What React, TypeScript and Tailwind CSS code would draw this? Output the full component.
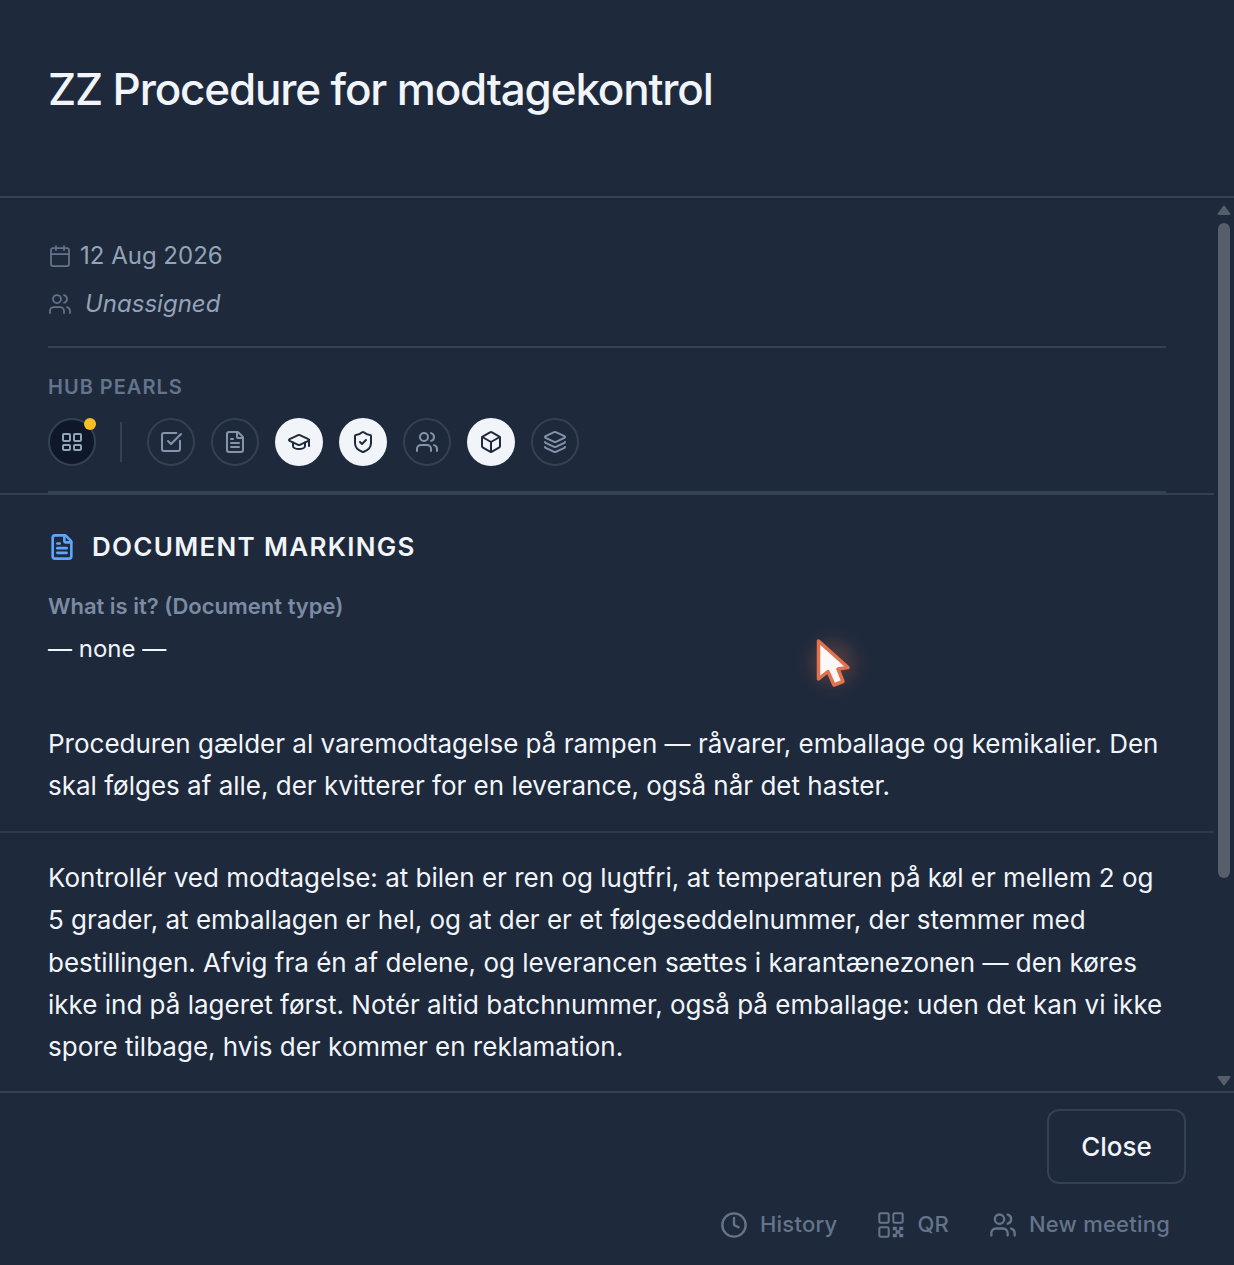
import { Calendar, Users, SquareCheckBig, FileText, GraduationCap, ShieldCheck, Box, Layers, Clock } from 'lucide-react';

const pearls = [
  { Icon: SquareCheckBig, active: false },
  { Icon: FileText, active: false },
  { Icon: GraduationCap, active: true },
  { Icon: ShieldCheck, active: true },
  { Icon: Users, active: false },
  { Icon: Box, active: true },
  { Icon: Layers, active: false },
];

// lucide's qr-code is too busy, the picture has three boxes and a checker
function QrIcon() {
  return (
    <svg viewBox="0 0 24 24" className="w-7 h-7" fill="none" stroke="currentColor" strokeWidth="1.75">
      <rect x="2" y="2" width="8" height="8" rx="1" />
      <rect x="14" y="2" width="8" height="8" rx="1" />
      <rect x="2" y="14" width="8" height="8" rx="1" />
      <path d="M13.5 13.5h3.5v3h-3.5zM19 13.5h3.5v3h-3.5zM16 16.5h4v3h-4zM13.5 19.5h3.5v3h-3.5zM19 19.5h3.5v3h-3.5z" fill="currentColor" stroke="none" />
    </svg>
  );
}

function GridIcon() {
  return (
    <svg viewBox="0 0 24 24" className="w-6 h-6" fill="none" stroke="currentColor" strokeWidth="2">
      <rect x="3" y="4" width="7" height="7" rx="1" />
      <rect x="14" y="4" width="7" height="7" rx="1" />
      <rect x="3" y="15" width="7" height="5" rx="1" />
      <rect x="14" y="15" width="7" height="5" rx="1" />
    </svg>
  );
}

export default function App() {
  return (
    <div className="relative w-[1234px] h-[1265px] flex flex-col overflow-hidden bg-[#1e293b] font-['Inter',sans-serif]">
      {/* Header */}
      <header className="h-[198px] shrink-0 border-b-2 border-[#334155] px-12 pt-[61px]">
        <h1 className="text-[44px] leading-[56px] font-medium tracking-[-0.0265em] text-[#f1f5f9]">ZZ Procedure for modtagekontrol</h1>
      </header>

      {/* Body + scrollbar */}
      <div className="flex-1 flex min-h-0">
        <main className="w-[1214px] shrink-0 overflow-hidden">
          <div className="px-12 pt-[40px]">
            <div className="h-9 flex items-center text-[#94a3b8] text-2xl">
              <Calendar className="w-6 h-6 text-[#64748b]" strokeWidth={1.75} />
              <span className="ml-2">12 Aug 2026</span>
            </div>
            <div className="h-9 mt-3 flex items-center text-[#94a3b8] text-2xl italic">
              <Users className="w-6 h-6 text-[#64748b]" strokeWidth={1.75} />
              <span className="ml-[13px]">Unassigned</span>
            </div>
          </div>

          <div className="mx-12 mt-[24px] w-[1118px] border-t-2 border-b-2 border-[#334155] pt-[25px] pb-[25px]">
            <div className="text-xl leading-7 font-semibold tracking-[0.05em] text-[#64748b]">HUB PEARLS</div>
            <div className="mt-[17px] flex items-center">
              <div className="relative w-12 h-12 rounded-full bg-[#0f172a] border-2 border-[#334155] flex items-center justify-center text-[#94a3b8]">
                <GridIcon />
                <span className="absolute -top-[2px] right-[-2px] w-3 h-3 rounded-full bg-[#fbbf24]" />
              </div>
              <div className="w-[2px] h-10 bg-[#334155] ml-6 mr-[25px]" />
              <div className="flex gap-4">
                {pearls.map(({ Icon, active }, i) => (
                  <div
                    key={i}
                    className={active
                      ? 'w-12 h-12 rounded-full bg-[#f1f5f9] flex items-center justify-center text-[#1e293b]'
                      : 'w-12 h-12 rounded-full border-2 border-[#334155] flex items-center justify-center text-[#8494ab]'}
                  >
                    <Icon className="w-6 h-6" strokeWidth={2} />
                  </div>
                ))}
              </div>
            </div>
          </div>

          <div className="border-t-2 border-[#334155] px-12 pt-[34px]">
            <div className="flex items-center">
              <FileText className="w-7 h-7 text-[#60a5fa]" strokeWidth={2.25} />
              <h2 className="ml-4 text-[26px] leading-9 font-semibold tracking-[0.05em] text-[#f1f5f9]">DOCUMENT MARKINGS</h2>
            </div>
            <div className="mt-[25px] text-[22px] leading-8 font-semibold text-[#7c8ba3]">What is it? (Document type)</div>
            <div className="mt-[9px] text-2xl leading-9 text-[#f1f5f9]">— none —</div>
            <p className="mt-[56px] text-[26px] leading-[1.625] text-[#f1f5f9]">
              Proceduren gælder al varemodtagelse på rampen — råvarer, emballage og kemikalier. Den skal følges af alle, der kvitterer for en leverance, også når det haster.
            </p>
          </div>

          <div className="mt-[23px] border-t-2 border-[#2c3a4e] px-12 pt-[24.5px]">
            <p className="text-[26px] leading-[1.625] text-[#f1f5f9]">
              Kontrollér ved modtagelse: at bilen er ren og lugtfri, at temperaturen på køl er mellem 2 og 5 grader, at emballagen er hel, og at der er et følgeseddelnummer, der stemmer med bestillingen. Afvig fra én af delene, og leverancen sættes i karantænezonen — den køres ikke ind på lageret først. Notér altid batchnummer, også på emballage: uden det kan vi ikke spore tilbage, hvis der kommer en reklamation.
            </p>
          </div>
        </main>

        {/* Scrollbar */}
        <div className="w-5 shrink-0 flex flex-col items-center pt-[7px] pb-[5px]">
          <svg viewBox="0 0 14 10" className="w-[14px] h-[10px] fill-[#565e6c] stroke-[#565e6c]" strokeWidth="2" strokeLinejoin="round"><path d="M7 1.5 L12.5 9 H1.5 Z" /></svg>
          <div className="mt-2 w-3 h-[655px] rounded-full bg-[#565e6c]" />
          <div className="flex-1" />
          <svg viewBox="0 0 14 10" className="w-[14px] h-[10px] fill-[#565e6c] stroke-[#565e6c]" strokeWidth="2" strokeLinejoin="round"><path d="M1.5 1 H12.5 L7 8.5 Z" /></svg>
        </div>
      </div>

      {/* Footer */}
      <footer className="h-[174px] shrink-0 border-t-2 border-[#334155] flex flex-col items-end px-12 pt-[16px]">
        <button className="w-[139px] h-[75px] rounded-xl border-2 border-[#334155] text-[26px] font-medium text-[#f1f5f9]">Close</button>
        <div className="mt-[24px] mr-4 flex items-center text-[22px] font-medium tracking-[0.01em] text-[#64748b]">
          <div className="flex items-center gap-3">
            <Clock className="w-7 h-7" strokeWidth={2} />
            <span>History</span>
          </div>
          <div className="flex items-center gap-3 ml-10">
            <QrIcon />
            <span>QR</span>
          </div>
          <div className="flex items-center gap-3 ml-10">
            <Users className="w-7 h-7" strokeWidth={2} />
            <span>New meeting</span>
          </div>
        </div>
      </footer>

      {/* Pointer */}
      <div className="absolute left-[815px] top-[638px] w-9 h-12 pointer-events-none">
        <div className="absolute left-[-22px] top-[-15px] w-20 h-20 rounded-full bg-[radial-gradient(circle,_rgba(232,120,80,0.3)_0%,_rgba(232,120,80,0.14)_30%,_rgba(232,120,80,0.03)_50%,_transparent_68%)]" />
        <svg viewBox="0 0 36 50" className="relative w-9 h-[50px]">
          <path d="M3.5 3 L33 29.5 L23 31 L28 43.5 L19 47 L13 33.5 L3.5 41 Z" fill="#fbf9f7" stroke="#e2714f" strokeWidth="3.5" strokeLinejoin="round" />
        </svg>
      </div>
    </div>
  );
}
